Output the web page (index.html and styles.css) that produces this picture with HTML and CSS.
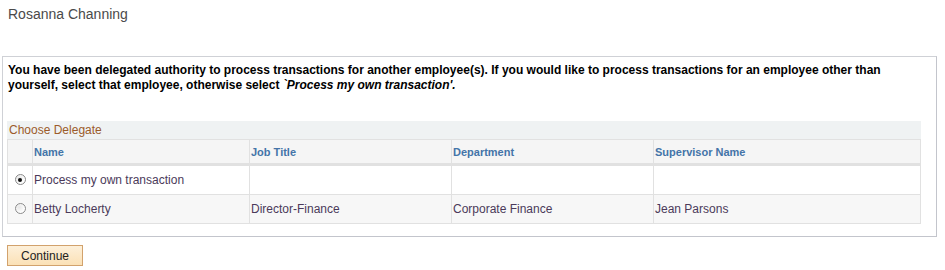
FILE: index.html
```html
<!DOCTYPE html>
<html lang="en">
<head>
    <meta charset="UTF-8">
    <title>Choose Delegate</title>
    <link rel="stylesheet" href="styles.css">
</head>
<body>

    <div class="page-title">Rosanna Channing</div>

    <div class="panel">
        <p class="intro">You have been delegated authority to process transactions for another employee(s). If you would like to process transactions for an employee other than yourself, select that employee, otherwise select <em>`Process my own transaction'.</em></p>

        <div class="grid">
            <div class="grid-title">Choose Delegate</div>
            <table>
                <tr class="head">
                    <th class="sel"></th>
                    <th class="c-name">Name</th>
                    <th class="c-job">Job Title</th>
                    <th class="c-dept">Department</th>
                    <th>Supervisor Name</th>
                </tr>
                <tr>
                    <td class="sel"><span class="radio on"></span></td>
                    <td>Process my own transaction</td>
                    <td></td>
                    <td></td>
                    <td></td>
                </tr>
                <tr class="alt">
                    <td class="sel"><span class="radio"></span></td>
                    <td>Betty Locherty</td>
                    <td>Director-Finance</td>
                    <td>Corporate Finance</td>
                    <td>Jean Parsons</td>
                </tr>
            </table>
        </div>
    </div>

    <button class="continue">Continue</button>

</body>
</html>
```

FILE: styles.css
```css
body {
    margin: 0;
    padding: 0;
    font-family: Arial, "Liberation Sans", sans-serif;
    font-size: 12px;
    color: #000;
    background: #fff;
}

.page-title {
    font-size: 14px;
    color: #4a4a4a;
    padding: 6px 0 0 8px;
    height: 56px;
    box-sizing: border-box;
}

.panel {
    margin: 0 0 0 2px;
    border: 1px solid #cfd1d6;
    border-right-color: #c3c5cc;
    border-bottom-color: #c3c5cc;
    padding: 6px 15px 12px 4px;
    width: 935px;
    box-sizing: border-box;
}

.intro {
    margin: 0 0 0 1px;
    font-weight: bold;
    line-height: 15px;
    height: 58px;
}

.intro em {
    font-style: italic;
}

.grid {
    width: 914px;
}

.grid-title {
    background: #eff2f3;
    color: #9b5b2a;
    font-size: 12px;
    height: 18px;
    line-height: 18px;
    padding-left: 2px;
}

table {
    width: 100%;
    border-collapse: collapse;
    table-layout: fixed;
}

th, td {
    border: 1px solid #e1e1e1;
    text-align: left;
    padding: 0 0 0 1px;
    white-space: nowrap;
}

th {
    background: #f5f5f5;
    color: #4474a8;
    font-size: 11px;
    font-weight: bold;
    height: 23px;
    border-bottom: 3px solid #e1e1e1;
}

td {
    height: 28px;
    color: #4b3a5a;
    background: #fff;
}

tr.alt td {
    background: #f7f7f7;
}

.sel {
    width: 24px;
    text-align: center;
    padding: 0;
}

.c-name { width: 215px; }
.c-job { width: 200px; }
.c-dept { width: 200px; }

.radio {
    display: inline-block;
    width: 9px;
    height: 9px;
    border: 1px solid #8a8a8a;
    border-radius: 50%;
    background: radial-gradient(circle at 35% 35%, #e6e6e6, #fff 70%);
    position: relative;
    vertical-align: middle;
    margin-top: -2px;
}

.radio.on::after {
    content: '';
    position: absolute;
    left: 2.5px;
    top: 2.5px;
    width: 4px;
    height: 4px;
    border-radius: 50%;
    background: #111;
}

.continue {
    margin: 8px 0 0 7px;
    width: 76px;
    height: 21px;
    font-family: Arial, "Liberation Sans", sans-serif;
    font-size: 12px;
    color: #222;
    border: 1px solid #d2a26c;
    background: linear-gradient(#fdf0da, #fbe1b6);
    padding: 0;
    cursor: pointer;
}
```
